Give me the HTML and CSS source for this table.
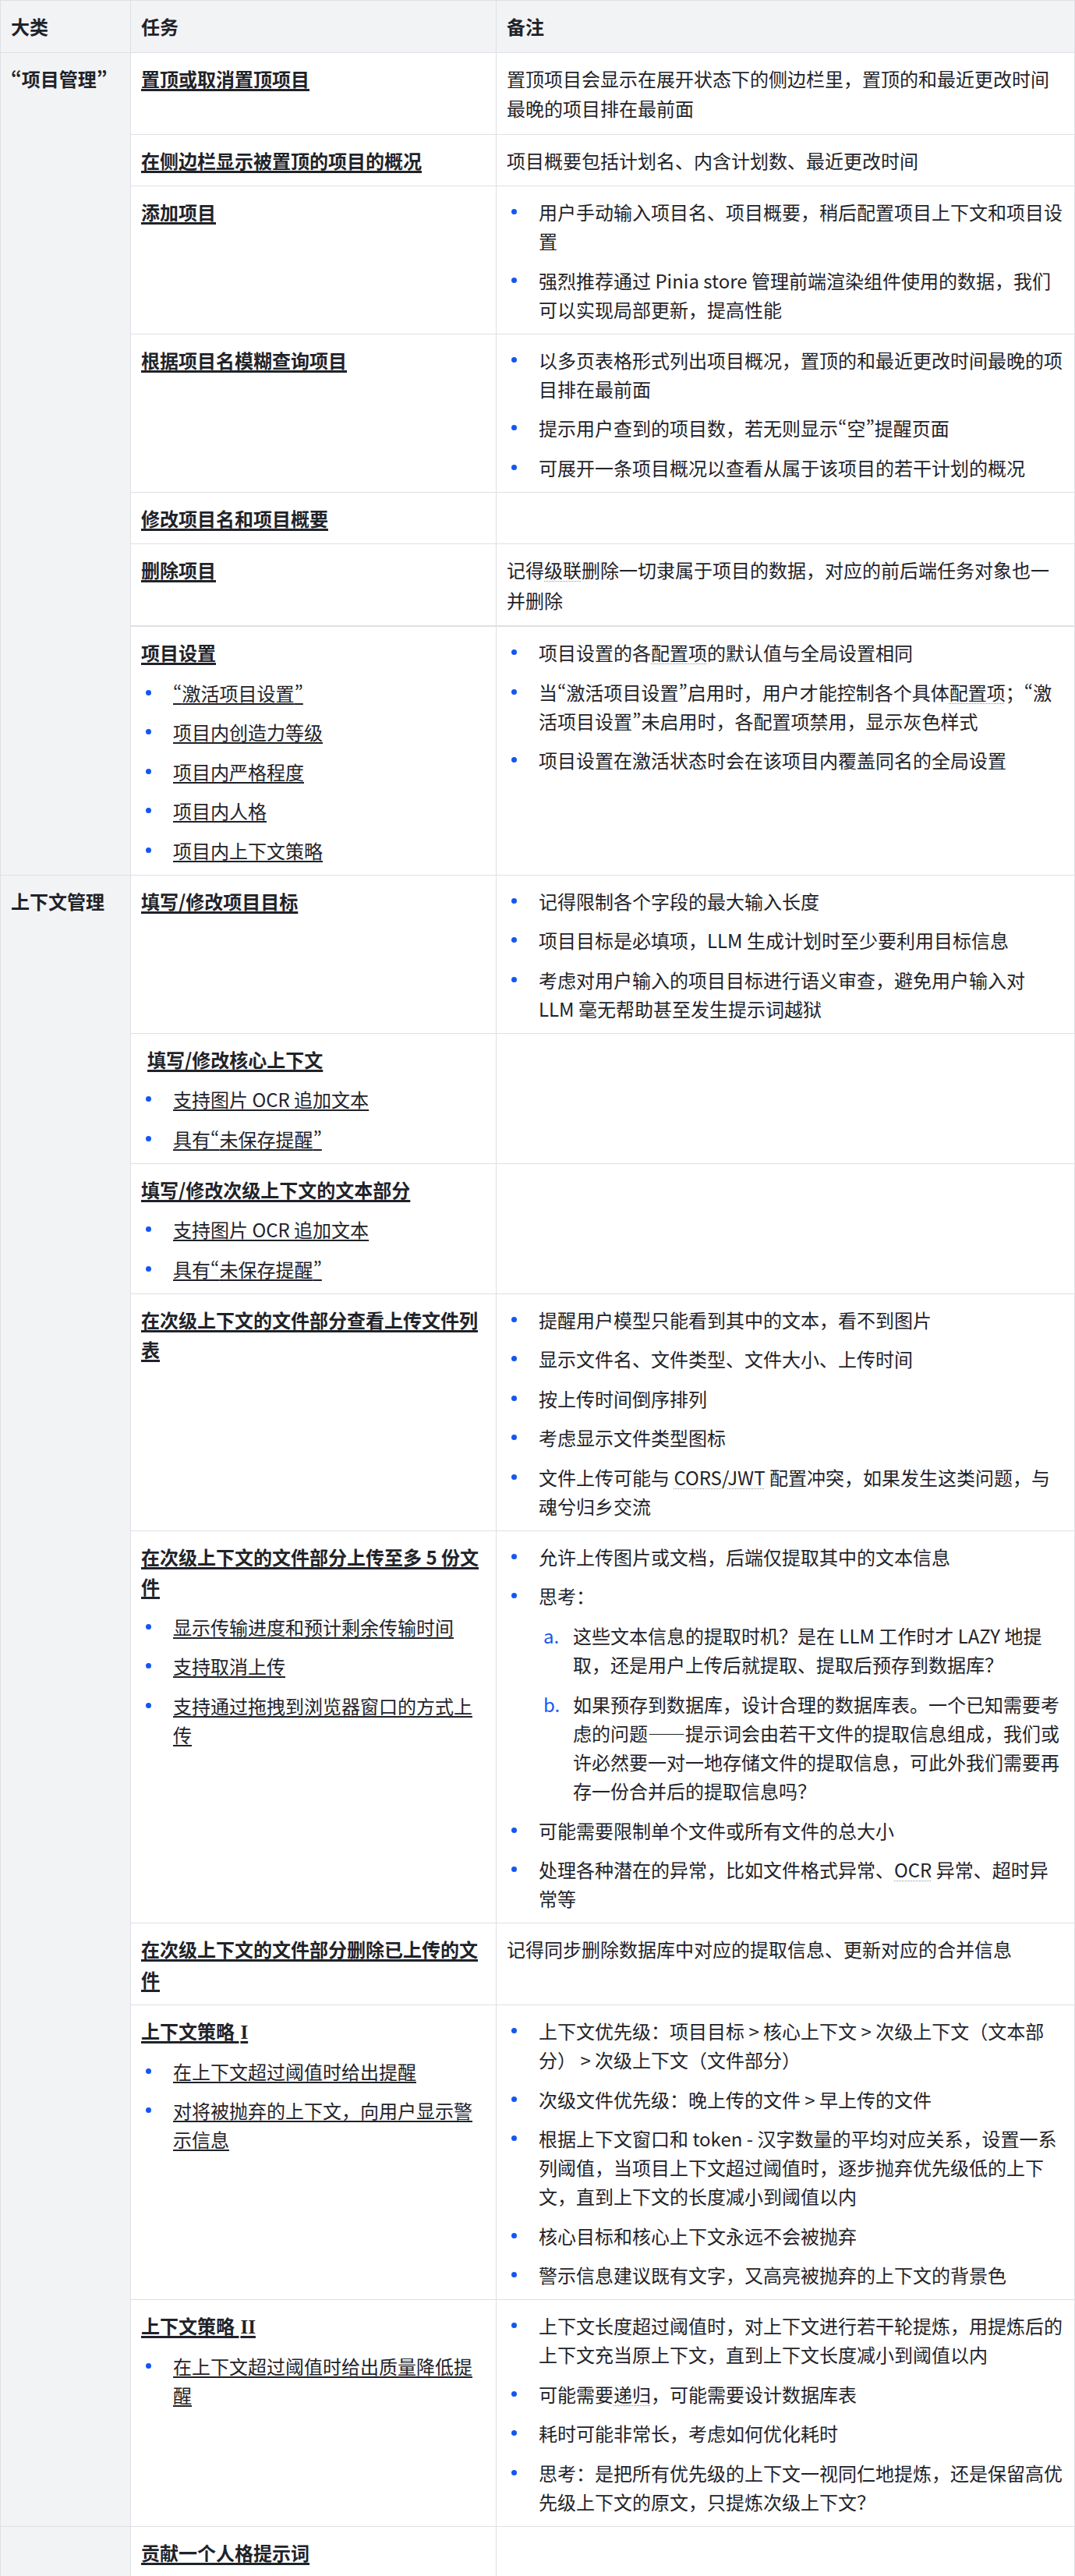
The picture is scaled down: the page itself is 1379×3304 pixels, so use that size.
FILE: index.html
```html
<!DOCTYPE html>
<html lang="zh-CN">
<head>
<meta charset="utf-8">
<title>项目任务规划</title>
<link rel="stylesheet" href="styles.css">
</head>
<body>
<table class="grid">
  <colgroup><col class="c1"><col class="c2"><col class="c3"></colgroup>
  <thead>
    <tr><th>大类</th><th>任务</th><th class="note">备注</th></tr>
  </thead>
  <tbody>
    <tr>
      <td class="cat" rowspan="7"><span class="pw">“</span>项目管理<span class="pw">”</span></td>
      <td><p class="para"><span class="task">置顶或取消置顶项目</span></p></td>
      <td class="note"><p class="para">置顶项目会显示在展开状态下的侧边栏里，置顶的和最近更改时间最晚的项目排在最前面</p></td>
    </tr>
    <tr>
      <td><p class="para"><span class="task">在侧边栏显示被置顶的项目的概况</span></p></td>
      <td class="note"><p class="para">项目概要包括计划名、内含计划数、最近更改时间</p></td>
    </tr>
    <tr>
      <td><p class="para"><span class="task">添加项目</span></p></td>
      <td class="note">
        <ul class="list">
          <li>用户手动输入项目名、项目概要，稍后配置项目上下文和项目设置</li>
          <li>强烈推荐通过 Pinia store 管理前端渲染组件使用的数据，我们可以实现局部更新，提高性能</li>
        </ul>
      </td>
    </tr>
    <tr>
      <td><p class="para"><span class="task">根据项目名模糊查询项目</span></p></td>
      <td class="note">
        <ul class="list">
          <li>以多页表格形式列出项目概况，置顶的和最近更改时间最晚的项目排在最前面</li>
          <li>提示用户查到的项目数，若无则显示<span class="pw">“</span>空<span class="pw">”</span>提醒页面</li>
          <li>可展开一条项目概况以查看从属于该项目的若干计划的概况</li>
        </ul>
      </td>
    </tr>
    <tr>
      <td><p class="para"><span class="task">修改项目名和项目概要</span></p></td>
      <td class="note"></td>
    </tr>
    <tr class="thick">
      <td><p class="para"><span class="task">删除项目</span></p></td>
      <td class="note"><p class="para">记得<span class="term">级联</span>删除一切隶属于项目的数据，对应的前后端任务对象也一并删除</p></td>
    </tr>
    <tr>
      <td>
        <p class="para"><span class="task">项目设置</span></p>
        <ul class="list sub">
          <li><span class="link"><span class="pw">“</span>激活项目设置<span class="pw">”</span></span></li>
          <li><span class="link">项目内创造力等级</span></li>
          <li><span class="link">项目内严格程度</span></li>
          <li><span class="link">项目内人格</span></li>
          <li><span class="link">项目内上下文策略</span></li>
        </ul>
      </td>
      <td class="note">
        <ul class="list">
          <li>项目设置的各<span class="term">配置项</span>的默认值与全局设置相同</li>
          <li>当<span class="pw">“</span>激活项目设置<span class="pw">”</span>启用时，用户才能控制各个具体<span class="term">配置项</span>；<span class="pw">“</span>激活项目设置<span class="pw">”</span>未启用时，各配置项禁用，显示灰色样式</li>
          <li>项目设置在激活状态时会在该项目内覆盖同名的全局设置</li>
        </ul>
      </td>
    </tr>
    <tr>
      <td class="cat" rowspan="8">上下文管理</td>
      <td><p class="para"><span class="task">填写/修改项目目标</span></p></td>
      <td class="note">
        <ul class="list">
          <li>记得限制各个字段的最大输入长度</li>
          <li>项目目标是必填项，LLM 生成计划时至少要利用目标信息</li>
          <li>考虑对用户输入的项目目标进行语义审查，避免用户输入对 LLM 毫无帮助甚至发生提示词越狱</li>
        </ul>
      </td>
    </tr>
    <tr>
      <td>
        <p class="para indent"><span class="task">填写/修改核心上下文</span></p>
        <ul class="list sub">
          <li><span class="link">支持图片 OCR 追加文本</span></li>
          <li><span class="link">具有<span class="pw">“</span>未保存提醒<span class="pw">”</span></span></li>
        </ul>
      </td>
      <td class="note"></td>
    </tr>
    <tr>
      <td>
        <p class="para"><span class="task">填写/修改次级上下文的文本部分</span></p>
        <ul class="list sub">
          <li><span class="link">支持图片 OCR 追加文本</span></li>
          <li><span class="link">具有<span class="pw">“</span>未保存提醒<span class="pw">”</span></span></li>
        </ul>
      </td>
      <td class="note"></td>
    </tr>
    <tr>
      <td><p class="para"><span class="task">在次级上下文的文件部分查看上传文件列表</span></p></td>
      <td class="note">
        <ul class="list">
          <li>提醒用户模型只能看到其中的文本，看不到图片</li>
          <li>显示文件名、文件类型、文件大小、上传时间</li>
          <li>按上传时间倒序排列</li>
          <li>考虑显示文件类型图标</li>
          <li>文件上传可能与 <span class="term">CORS</span>/<span class="term">JWT</span> 配置冲突，如果发生这类问题，与魂兮归乡交流</li>
        </ul>
      </td>
    </tr>
    <tr>
      <td>
        <p class="para"><span class="task">在次级上下文的文件部分上传至多 5 份文件</span></p>
        <ul class="list sub">
          <li><span class="link">显示传输进度和预计剩余传输时间</span></li>
          <li><span class="link">支持取消上传</span></li>
          <li><span class="link">支持通过拖拽到浏览器窗口的方式上传</span></li>
        </ul>
      </td>
      <td class="note">
        <ul class="list">
          <li>允许上传图片或文档，后端仅提取其中的文本信息</li>
          <li>思考：
            <ol class="alpha">
              <li>这些文本信息的提取时机？是在 LLM 工作时才 LAZY 地提取，还是用户上传后就提取、提取后预存到数据库？</li>
              <li>如果预存到数据库，设计合理的数据库表。一个已知需要考虑的问题——提示词会由若干文件的提取信息组成，我们或许必然要一对一地存储文件的提取信息，可此外我们需要再存一份合并后的提取信息吗？</li>
            </ol>
          </li>
          <li>可能需要限制单个文件或所有文件的总大小</li>
          <li>处理各种潜在的异常，比如文件格式异常、<span class="term">OCR</span> 异常、超时异常等</li>
        </ul>
      </td>
    </tr>
    <tr>
      <td><p class="para"><span class="task">在次级上下文的文件部分删除已上传的文件</span></p></td>
      <td class="note"><p class="para">记得同步删除数据库中对应的提取信息、更新对应的合并信息</p></td>
    </tr>
    <tr>
      <td>
        <p class="para"><span class="task">上下文策略 <span class="roman">I</span></span></p>
        <ul class="list sub">
          <li><span class="link">在上下文超过阈值时给出提醒</span></li>
          <li><span class="link">对将被抛弃的上下文，向用户显示警示信息</span></li>
        </ul>
      </td>
      <td class="note">
        <ul class="list">
          <li>上下文优先级：项目目标 &gt; 核心上下文 &gt; 次级上下文（文本部分） &gt; 次级上下文（文件部分）</li>
          <li>次级文件优先级：晚上传的文件 &gt; 早上传的文件</li>
          <li>根据上下文窗口和 token - 汉字数量的平均对应关系，设置一系列阈值，当项目上下文超过阈值时，逐步抛弃优先级低的上下文，直到上下文的长度减小到阈值以内</li>
          <li>核心目标和核心上下文永远不会被抛弃</li>
          <li>警示信息建议既有文字，又高亮被抛弃的上下文的背景色</li>
        </ul>
      </td>
    </tr>
    <tr>
      <td>
        <p class="para"><span class="task">上下文策略 <span class="roman">II</span></span></p>
        <ul class="list sub">
          <li><span class="link">在上下文超过阈值时给出质量降低提醒</span></li>
        </ul>
      </td>
      <td class="note">
        <ul class="list">
          <li>上下文长度超过阈值时，对上下文进行若干轮提炼，用提炼后的上下文充当原上下文，直到上下文长度减小到阈值以内</li>
          <li>可能需要<span class="term">递归</span>，可能需要设计数据库表</li>
          <li>耗时可能非常长，考虑如何优化耗时</li>
          <li>思考：是把所有优先级的上下文一视同仁地提炼，还是保留高优先级上下文的原文，只提炼次级上下文？</li>
        </ul>
      </td>
    </tr>
    <tr>
      <td class="cat"></td>
      <td><p class="para"><span class="task">贡献一个人格提示词</span></p></td>
      <td class="note"></td>
    </tr>
  </tbody>
</table>
</body>
</html>
```

FILE: styles.css
```css
* {
  box-sizing: border-box;
}

html,
body {
  margin: 0;
  padding: 0;
  background: #ffffff;
}

body {
  font-family: "Noto Sans CJK SC", "Noto Sans", sans-serif;
  font-size: 24px;
  color: #1f2329;
  text-autospace: no-autospace;
  text-spacing-trim: space-all;
}

.grid {
  width: 1379px;
  table-layout: fixed;
  border-collapse: separate;
  border-spacing: 0;
  border-top: 1px solid #dee0e3;
  border-left: 1px solid #dee0e3;
}

.c1 { width: 167px; }
.c2 { width: 469px; }
.c3 { width: 742px; }

.grid th,
.grid td {
  border-right: 1px solid #dee0e3;
  border-bottom: 1px solid #dee0e3;
  padding: 14px 12px 13px 13px;
  vertical-align: top;
  text-align: left;
  line-height: 38.5px;
  font-weight: 400;
}

.grid th.note,
.grid td.note {
  padding-right: 14px;
}

.grid th {
  background: #f2f3f5;
  font-weight: 700;
}

.grid td.cat {
  background: #f2f3f5;
  font-weight: 700;
}

.grid tr.thick > td {
  border-bottom-width: 2px;
}

.pw {
  font-variant-east-asian: proportional-width;
}

.roman {
  font-family: "Liberation Serif", "DejaVu Serif", serif;
  font-size: 25px;
  line-height: 1;
  margin-left: 2px;
}

.para {
  margin: 0;
  line-height: 38.5px;
}

.indent {
  padding-left: 8px;
}

.task {
  font-weight: 700;
  text-decoration: underline;
  text-decoration-color: #1f2329;
  text-decoration-thickness: 2.5px;
  text-underline-offset: 3px;
}

.link {
  text-decoration: underline;
  text-decoration-color: #1f2329;
  text-decoration-thickness: 2px;
  text-underline-offset: 3px;
}

.term {
  text-decoration: underline dotted #8f959e;
  text-decoration-thickness: 1px;
  text-underline-offset: 4px;
}

.list {
  margin: 0;
  padding: 0 0 0 41px;
  list-style: none;
}

.list.sub {
  margin-top: 13px;
}

.list > li {
  position: relative;
  line-height: 37px;
}

.list > li + li {
  margin-top: 13.5px;
}

.list > li::before {
  content: "";
  position: absolute;
  left: -35px;
  top: 15px;
  width: 7px;
  height: 7px;
  border-radius: 50%;
  background: #1456f0;
}

.alpha {
  margin: 14px 0 0;
  padding: 0 0 0 44px;
  list-style: none;
  counter-reset: al;
}

.alpha > li {
  position: relative;
  line-height: 37px;
  counter-increment: al;
}

.alpha > li + li {
  margin-top: 14px;
}

.alpha > li::before {
  content: counter(al, lower-alpha) ".";
  position: absolute;
  left: -38px;
  top: 0;
  color: #1456f0;
}
```
